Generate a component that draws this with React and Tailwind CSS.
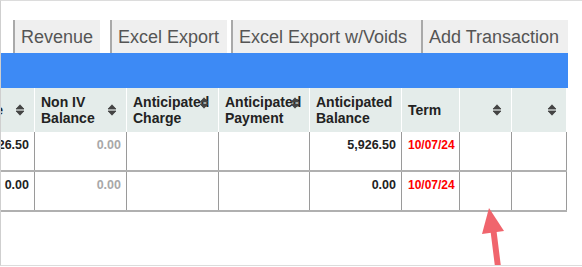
import React from "react";

const cols = "grid grid-cols-[34px_92px_92px_91px_92px_58px_52px_55px]";

function SortIcon({ className }) {
  return (
    <svg
      className={className}
      width="10"
      height="12"
      viewBox="0 0 10 12"
      aria-hidden="true"
    >
      <path d="M1 5 L5 0.8 L9 5 Z" fill="#444" stroke="#444" strokeWidth="0.8" strokeLinejoin="round" />
      <path d="M1 7 L5 11.2 L9 7 Z" fill="#444" stroke="#444" strokeWidth="0.8" strokeLinejoin="round" />
    </svg>
  );
}

function Tab({ children, className }) {
  return (
    <div
      className={
        "h-[33px] flex items-center bg-[#efefef] border-l-2 border-[#a9a9a9] pl-[6px] text-[18px] leading-[18px] text-[#555] whitespace-nowrap " +
        className
      }
    >
      {children}
    </div>
  );
}

function HeadCell({ children, icon, iconTop, className = "" }) {
  return (
    <div
      className={
        "relative h-[44px] border-r border-white pl-[6px] flex items-center text-[14px] font-bold leading-[16px] text-[#222] " +
        className
      }
    >
      <div className="whitespace-nowrap">{children}</div>
      {icon &&
        (iconTop ? (
          <SortIcon className="absolute right-[9px] top-[9px]" />
        ) : (
          <SortIcon className="absolute right-[9px] top-[16px]" />
        ))}
    </div>
  );
}

function NumCell({ children, gray }) {
  return (
    <div className="h-[38px] border-r border-[#9a9a9a] pr-[5px] pt-[6px] flex justify-end overflow-hidden whitespace-nowrap text-[12.5px] font-bold leading-[14px]">
      <span className={gray ? "text-[#a8a8a8]" : "text-[#222]"}>{children}</span>
    </div>
  );
}

function TermCell({ children }) {
  return (
    <div className="h-[38px] border-r border-[#9a9a9a] pl-[6px] pt-[6px] whitespace-nowrap text-[12px] font-bold leading-[14px] text-[#f00]">
      {children}
    </div>
  );
}

function EmptyCell() {
  return <div className="h-[38px] border-r border-[#9a9a9a]" />;
}

function Row({ first, nonIv, balance, term }) {
  return (
    <div className={cols + " w-[566px] border-b-2 border-[#b0b0b0]"}>
      <NumCell>{first}</NumCell>
      <NumCell gray>{nonIv}</NumCell>
      <EmptyCell />
      <EmptyCell />
      <NumCell>{balance}</NumCell>
      <TermCell>{term}</TermCell>
      <EmptyCell />
      <EmptyCell />
    </div>
  );
}

export default function App() {
  return (
    <div
      className="relative w-[582px] h-[266px] bg-white border-t border-l border-b border-t-[#dcdcdc] border-l-[#cfcfcf] border-b-[#dcdcdc] overflow-hidden"
      style={{ fontFamily: '"Liberation Sans", Arial, sans-serif' }}
    >
      <div className="pt-[19px]">
        <div className="flex pl-[12px]">
          <Tab className="w-[87px]">Revenue</Tab>
          <Tab className="w-[117px] ml-[10px]">Excel Export</Tab>
          <Tab className="w-[190px] ml-[4px]">Excel Export w/Voids</Tab>
          <Tab className="w-[147px]">Add Transaction</Tab>
        </div>
        <div className="w-[567px] h-[35px] bg-[#3d8af5]" />
        <div className={cols + " w-[566px] bg-[#e4ecea]"}>
          <div className="relative h-[44px] border-r border-white overflow-hidden text-[14px] font-bold leading-[16px] text-[#222]">
            <span className="absolute right-[31px] top-[14px] whitespace-nowrap">Balance</span>
            <SortIcon className="absolute right-[9px] top-[16px]" />
          </div>
          <HeadCell icon>
            Non IV
            <br />
            Balance
          </HeadCell>
          <HeadCell icon iconTop>
            Anticipated
            <br />
            Charge
          </HeadCell>
          <HeadCell icon iconTop className="pl-[5px]">
            Anticipated
            <br />
            Payment
          </HeadCell>
          <HeadCell>
            Anticipated
            <br />
            Balance
          </HeadCell>
          <HeadCell>Term</HeadCell>
          <HeadCell icon />
          <HeadCell icon />
        </div>
        <Row first="5,926.50" nonIv="0.00" balance="5,926.50" term="10/07/24" />
        <Row first="0.00" nonIv="0.00" balance="0.00" term="10/07/24" />
      </div>

      <svg
        className="absolute left-0 top-0 pointer-events-none"
        width="582"
        height="267"
        viewBox="0 0 582 267"
        aria-hidden="true"
      >
        <line x1="492.5" y1="230" x2="497.5" y2="270" stroke="#f0656d" strokeWidth="6" />
        <polygon points="488,207 481,233 503,230" fill="#f0656d" />
      </svg>
    </div>
  );
}
